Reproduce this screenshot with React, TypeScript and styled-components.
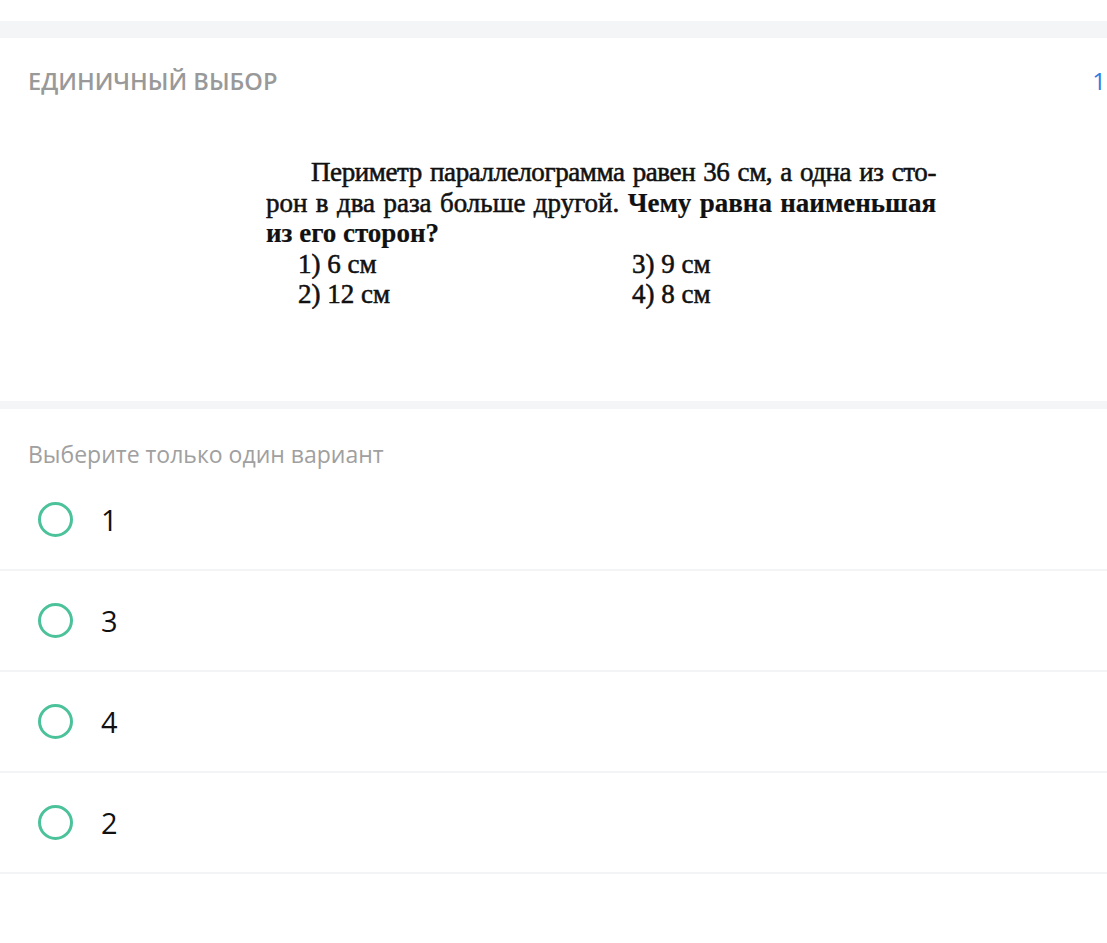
import React from 'react'
import styled, { createGlobalStyle } from 'styled-components'

const GlobalStyle = createGlobalStyle`
  html, body {
    margin: 0;
    padding: 0;
    background: #ffffff;
    font-family: "Open Sans", "Noto Sans", sans-serif;
    overflow-x: hidden;
  }
`

type Option = {
  id: number;
  label: string;
}

const options: Option[] = [
  { id: 1, label: '1' },
  { id: 2, label: '3' },
  { id: 3, label: '4' },
  { id: 4, label: '2' },
]

const Page = styled.div`
  width: 1107px;
  min-height: 943px;
  padding-top: 21px;
  overflow: hidden;
`

const Band = styled.div<{ $height: number }>`
  height: ${props => props.$height}px;
  background-color: #f4f5f7;
`

const Card = styled.section`
  height: 363px;
  display: flex;
  flex-direction: column;
`

const Header = styled.div`
  display: flex;
  justify-content: space-between;
  align-items: flex-start;
  padding: 27px 0 0 28px;
`

const Title = styled.h2`
  margin: 0;
  font-size: 23.6px;
  line-height: 32px;
  font-weight: 600;
  color: #999999;
  text-transform: uppercase;
`

const Score = styled.span`
  font-size: 24px;
  line-height: 32px;
  padding-right: 1px;
  color: #2f7be5;
`

const Problem = styled.div`
  width: 670px;
  margin: 60px 0 0 266px;
  font-family: "Liberation Serif", "Times New Roman", serif;
  font-size: 27px;
  line-height: 30.5px;
  color: #111;
  -webkit-text-stroke: 0.55px #111;
`

const Line = styled.div<{ $indent?: number; $fill?: boolean; $spacing?: number }>`
  text-indent: ${props => props.$indent || 0}px;
  text-align: ${props => (props.$fill ? 'justify' : 'left')};
  text-align-last: ${props => (props.$fill ? 'justify' : 'left')};
  letter-spacing: ${props => props.$spacing || 0}px;
  white-space: nowrap;
`

const Strong = styled.b`
  font-weight: 700;
  -webkit-text-stroke: 0.2px #111;
`

const Choices = styled.div`
  display: grid;
  grid-template-columns: 334px 334px;
  padding-left: 32px;
`

const Answers = styled.section`
  padding-top: 29px;
`

const Hint = styled.p`
  margin: 0;
  padding-left: 28px;
  font-size: 23px;
  line-height: 32px;
  color: #a0a0a0;
`

const Row = styled.label`
  display: flex;
  align-items: center;
  gap: 28px;
  height: 99px;
  padding-left: 38px;
  border-bottom: 2px solid #f3f4f6;
  cursor: pointer;
`

const Radio = styled.span`
  box-sizing: border-box;
  width: 35px;
  height: 35px;
  border-radius: 50%;
  border: 3.7px solid #4cc29b;
`

const RowText = styled.span`
  font-size: 29px;
  color: #111;
`

const App = () => {
  return (
    <>
      <GlobalStyle />
      <Page>
        <Band $height={17} />
        <Card>
          <Header>
            <Title>Единичный выбор</Title>
            <Score>1</Score>
          </Header>
          <Problem>
            <Line $indent={45} $fill $spacing={-0.4}>
              Периметр параллелограмма равен 36 см, а одна из сто-
            </Line>
            <Line $fill>
              рон в два раза больше другой. <Strong>Чему равна наименьшая</Strong>
            </Line>
            <Line>
              <Strong>из его сторон?</Strong>
            </Line>
            <Choices>
              <span>1) 6 см</span>
              <span>3) 9 см</span>
              <span>2) 12 см</span>
              <span>4) 8 см</span>
            </Choices>
          </Problem>
        </Card>
        <Band $height={8} />
        <Answers>
          <Hint>Выберите только один вариант</Hint>
          {options.map(item => (
            <Row key={item.id}>
              <Radio />
              <RowText>{item.label}</RowText>
            </Row>
          ))}
        </Answers>
      </Page>
    </>
  )
}

export default App
